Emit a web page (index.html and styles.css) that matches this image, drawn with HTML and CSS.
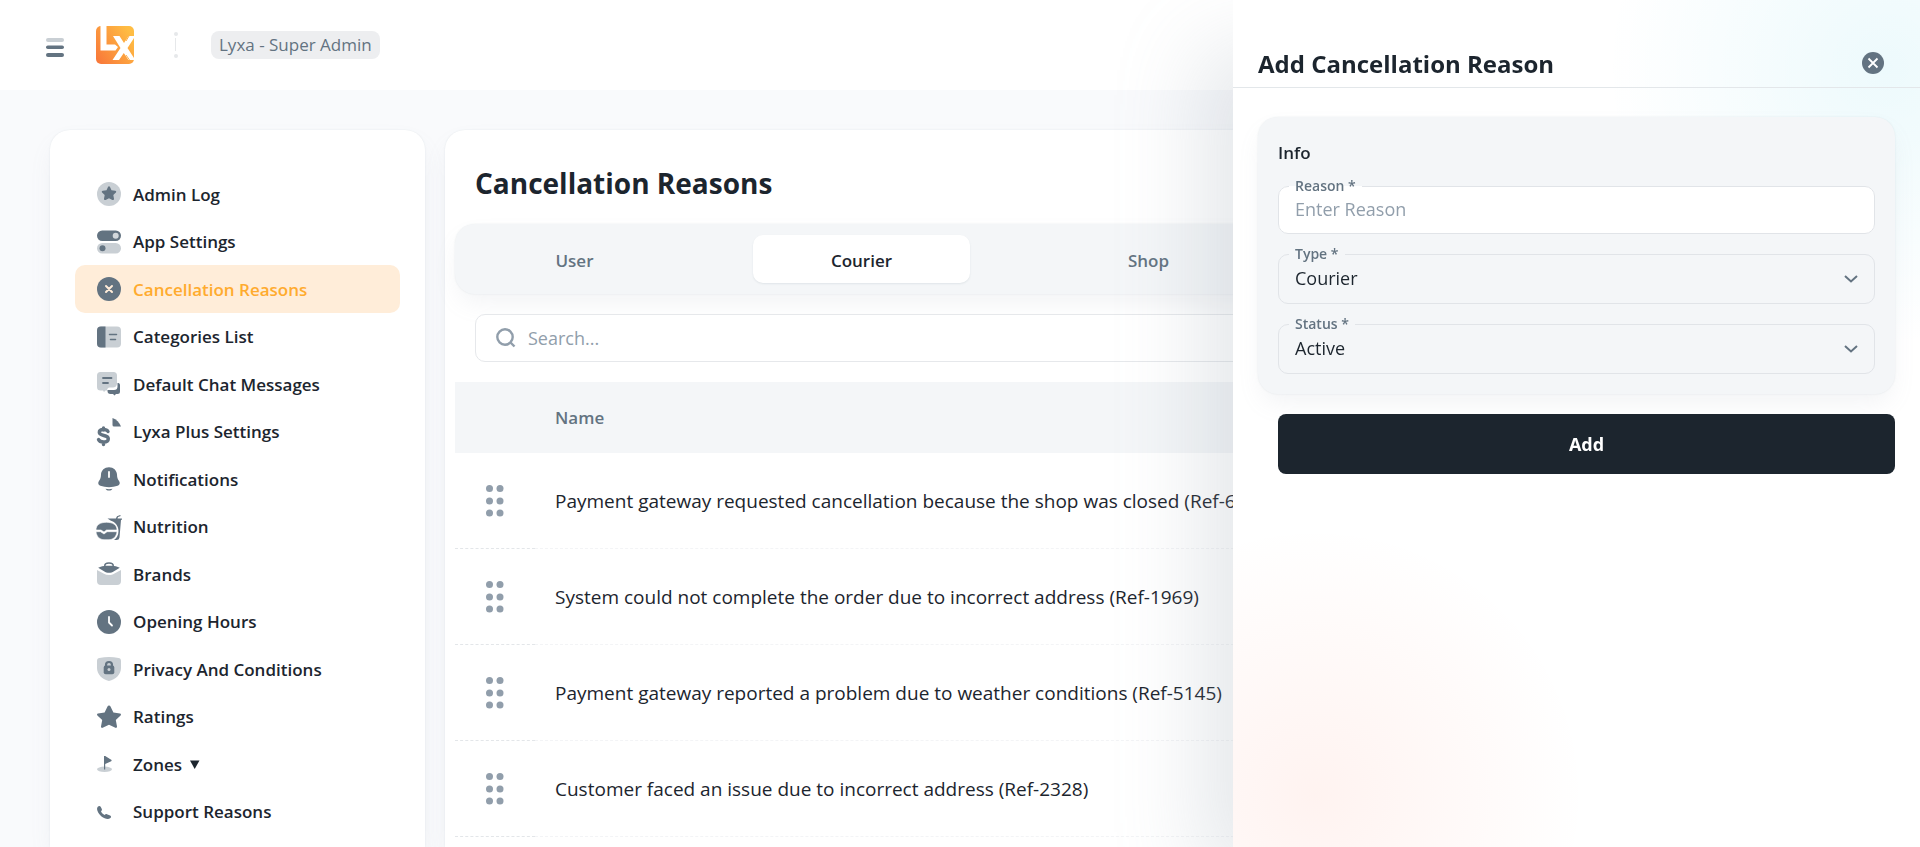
FILE: index.html
```html
<!DOCTYPE html>
<html lang="en">
<head>
<meta charset="utf-8">
<title>Cancellation Reasons</title>
<link rel="stylesheet" href="styles.css">
</head>
<body>
<header class="topbar">
  <button class="menu-button" type="button" aria-label="Menu">
    <svg width="18" height="20" viewBox="0 0 18 20"><rect class="soft" y="0" width="18" height="4" rx="2"/><rect y="7.500" width="18" height="3.600" rx="1.800"/><rect y="15" width="18" height="4" rx="2"/></svg>
  </button>
  <a class="logo" href="#" aria-label="Home">
    <svg width="38" height="38" viewBox="0 0 38 38">
      <defs><linearGradient id="logo-fill" x1="0" y1="1" x2="1" y2="0.3"><stop offset="0" stop-color="#f87439"/><stop offset="1" stop-color="#ffbd43"/></linearGradient></defs>
      <rect width="38" height="38" rx="5" fill="url(#logo-fill)"/>
      <path fill="#fff" d="M4.500 0h6v18.500H19l3 2.500-2.500 3.500h-15z"/>
      <path fill="#fff" d="M17 10h6.500l4.500 7 4.500-7H38v2l-6.500 10L38 32v2h-5.500l-4.700-7-4.800 7h-6.500l8-12z"/>
      <path d="M30 15l3-5M30 29l3.500 5" stroke="#fdae4b" fill="none"/>
    </svg>
  </a>
  <svg class="divider" width="6" height="28" viewBox="0 0 6 28"><circle cx="3" cy="3" r="2"/><path d="M2 7h1v13H2z"/><circle cx="3" cy="25" r="2"/></svg>
  <span class="chip">Lyxa - Super Admin</span>
</header>

<div class="layout">
  <nav class="sidebar">
    <a class="nav-item" href="#"><svg class="icon" viewBox="0 0 24 24"><circle class="soft" cx="12" cy="12" r="12"/><path d="M12 4.200c.5 0 .8.300 1 .7l1.500 3.300 3.700.5c1 .1 1.400 1.100.7 1.800l-2.600 2.600.7 3.700c.1.900-.8 1.600-1.600 1.100L12 16.200l-3.400 1.700c-.8.500-1.700-.2-1.600-1.100l.7-3.700-2.600-2.600c-.7-.7-.3-1.700.7-1.800l3.700-.5L11 4.900c.2-.4.500-.7 1-.7z"/></svg>Admin Log</a>
    <a class="nav-item" href="#"><svg class="icon" viewBox="0 0 24 24"><rect y="0.500" width="24" height="10.500" rx="5.200"/><circle cx="18.700" cy="5.800" r="3" fill="#d3d8dc"/><rect class="soft" y="13" width="24" height="10.500" rx="5.200"/><circle cx="5.500" cy="18.200" r="3"/></svg>App Settings</a>
    <a class="nav-item nav-item-active" href="#"><svg class="icon" viewBox="0 0 24 24"><circle cx="12" cy="12" r="12"/><path d="M9 9l6 6M15 9l-6 6" stroke="#ffecd8" stroke-width="2" stroke-linecap="round"/></svg>Cancellation Reasons</a>
    <a class="nav-item" href="#"><svg class="icon" viewBox="0 0 24 24"><rect class="soft" y="1.500" width="24" height="21" rx="4"/><path d="M4 1.500h4.500v21H4a4 4 0 0 1-4-4v-13a4 4 0 0 1 4-4z"/><path d="M12.500 9.500h7M13.500 14.500h5" stroke="#637381" stroke-width="1.500" stroke-linecap="round"/></svg>Categories List</a>
    <a class="nav-item" href="#"><svg class="icon" viewBox="0 0 24 24"><path class="soft" d="M3.500 0h13A3.500 3.500 0 0 1 20 3.500v8.500c-.5 2.500-2 3.500-4 3.500h-3.500c-1.500 0-2.500 1.500-2.500 3h-1.500L7 20l-1-1.500H3.500A3.500 3.500 0 0 1 0 15V3.500A3.500 3.500 0 0 1 3.500 0z"/><path d="M20.500 11h1a2 2 0 0 1 1.500 2v6.500a2.500 2.500 0 0 1-2.500 2.500H19l-1.500 1.500L16 22h-2.500a3 3 0 0 1-3-3v-1H17a3.500 3.500 0 0 0 3.500-3.500z"/><path d="M6 6h8.500M6 11h5" stroke="#637381" stroke-width="1.800" stroke-linecap="round"/></svg>Default Chat Messages</a>
    <a class="nav-item" href="#"><svg class="icon" viewBox="0 0 24 24"><path d="M11 11.500C10 9.800 8.500 9.500 6.500 9.500c-2.500 0-4.200 1-4.200 2.800 0 4.400 9 2 9 6.400 0 2-2 3.300-4.800 3.300-2.500 0-4.200-.6-5-2.500M6.500 8v2M6.500 22.500v2" fill="none" stroke="#637381" stroke-width="3.400" stroke-linecap="round"/><path d="M15.500-2c3.800 1.400 7 4.500 8.500 8.500h-7a1.500 1.500 0 0 1-1.500-1.500z"/></svg>Lyxa Plus Settings</a>
    <a class="nav-item" href="#"><svg class="icon" viewBox="0 0 24 24"><path d="M12 .3c4.500 0 7.800 3.200 8 7.200.1 3 .5 4.500 1.900 6.300 1.500 2 1 4.300-1.300 5C15.500 20.700 8.500 20.700 3.400 18.800c-2.300-.7-2.800-3-1.300-5C3.500 12 3.900 10.500 4 7.500 4.200 3.500 7.500.3 12 .3z"/><path d="M8.500 21.700c2.300.6 4.700.6 7 0-1.300 2.500-5.700 2.500-7 0z"/><path d="M12 5v5" stroke="#fff" stroke-width="1.800" stroke-linecap="round"/></svg>Notifications</a>
    <a class="nav-item" href="#"><svg class="icon" viewBox="0 0 24 24"><path d="M10.500 3.500h8.300L20 1.200 23.200 0l.5 1-2.700 1.100-.5 1.400H25l-.3 1.500h-.7l-1.500 17.500a3 3 0 0 1-3 2.500h-2.500c2.500-2 4.500-4.500 4.500-9 0-5-3-9-8-10.500z"/><path d="M-1 15C-1 10 3 7.300 9.500 7.300S20 10 20 15H9.500L7 17l-3-2zM-1 16.700h4.500L7 19l3-2.300h10c-.5 5-4 8-8 8H7c-4 0-7.500-3-8-8z" stroke="#fff" stroke-width="0.600"/></svg>Nutrition</a>
    <a class="nav-item" href="#"><svg class="icon" viewBox="0 0 24 24"><path class="soft" d="M0 8l6.500 3.500c3.500 2 7.500 2 11 0L24 8v11a4 4 0 0 1-4 4H4a4 4 0 0 1-4-4z"/><path fill-rule="evenodd" d="M7 4c0-2.500 1.500-3.700 5-3.700S17 1.500 17 4c2.500.3 4.200 1 5.800 1.800L17 9.200c-3 2-7 2-10 0L1.200 5.800C2.800 5 4.500 4.300 7 4zm1.500-.2h7c0-1.300-1-2-3.500-2s-3.500.7-3.500 2z"/></svg>Brands</a>
    <a class="nav-item" href="#"><svg class="icon" viewBox="0 0 24 24"><circle cx="12" cy="12" r="12"/><path d="M12 7v5.500l3 3" fill="none" stroke="#fff" stroke-width="1.800" stroke-linecap="round" stroke-linejoin="round"/></svg>Opening Hours</a>
    <a class="nav-item" href="#"><svg class="icon" viewBox="0 0 24 24"><path class="soft" d="M2.500 1C8.500-.3 15.500-.3 21.500 1 23 1.300 24 2 24 4v7c0 6.500-5.500 11.500-12 13C5.500 22.500 0 17.500 0 11V4c0-2 1-2.700 2.500-3z"/><rect x="6.700" y="8.500" width="10.600" height="8.700" rx="2"/><path d="M9 9.500V8a3 3 0 0 1 6 0v1.500" fill="none" stroke="#637381" stroke-width="2.200"/><circle cx="12" cy="12.500" r="1.500" fill="#c9cfd4"/></svg>Privacy And Conditions</a>
    <a class="nav-item" href="#"><svg class="icon" viewBox="0 0 24 24"><path d="M12 .5c.7 0 1.200.5 1.500 1.100l2.900 6 6.600.9c1 .2 1.300 1.200.6 1.900l-4.800 4.700 1.200 6.500c.1 1-.8 1.600-1.600 1.200L12 19.700l-6.400 3.100c-.8.400-1.700-.2-1.600-1.200l1.200-6.500L.4 10.400C-.3 9.700 0 8.700 1 8.500l6.600-.9 2.900-6C10.800 1 11.300.5 12 .5z"/></svg>Ratings</a>
    <a class="nav-item" href="#"><svg class="icon" viewBox="0 0 24 24"><ellipse class="soft" cx="7.500" cy="17.300" rx="7.500" ry="2.700"/><path d="M7 4h1.200l6 3.800c.6.400.6 1 0 1.400L8.200 12v5.500H7z"/></svg>Zones<svg class="caret" width="10" height="9" viewBox="0 0 10 9"><path d="M0 .5h9.500L4.700 9z"/></svg></a>
    <a class="nav-item" href="#"><svg class="icon" viewBox="0 0 24 24"><path d="M.8 6.800c1-1 2.400-1 3 .2l1 2c.4.9 0 1.700-.8 2.300.7 1.900 1.900 3 3.700 3.700.6-.8 1.300-1.200 2.200-.8l3.200 1.200c1.200.5 1.200 1.800.3 2.600-2 1.700-5.600 1-8.900-1.500C1.200 13.500-1.200 9 .8 6.800z"/></svg>Support Reasons</a>
  </nav>

  <main class="content">
    <h1 class="page-title">Cancellation Reasons</h1>
    <div class="tabs" role="tablist">
      <button class="tab" type="button" role="tab">User</button>
      <button class="tab tab-active" type="button" role="tab" aria-selected="true">Courier</button>
      <button class="tab" type="button" role="tab">Shop</button>
    </div>
    <label class="search">
      <svg width="20" height="20" viewBox="0 0 20 20"><circle cx="9" cy="9" r="7.700"/><path d="M14.500 14.500l4 4"/></svg>
      <input type="search" placeholder="Search..." aria-label="Search">
    </label>
    <table class="reasons">
      <thead><tr><th class="drag-cell"></th><th>Name</th></tr></thead>
      <tbody>
        <tr><td class="drag-cell"><svg class="grip" width="18" height="32" viewBox="0 0 18 32"><circle cx="3.500" cy="3.500" r="3.500"/><circle cx="14" cy="3.500" r="3.500"/><circle cx="3.500" cy="16" r="3.500"/><circle cx="14" cy="16" r="3.500"/><circle cx="3.500" cy="28" r="3.500"/><circle cx="14" cy="28" r="3.500"/></svg></td><td>Payment gateway requested cancellation because the shop was closed (Ref-6</td></tr>
        <tr><td class="drag-cell"><svg class="grip" width="18" height="32" viewBox="0 0 18 32"><circle cx="3.500" cy="3.500" r="3.500"/><circle cx="14" cy="3.500" r="3.500"/><circle cx="3.500" cy="16" r="3.500"/><circle cx="14" cy="16" r="3.500"/><circle cx="3.500" cy="28" r="3.500"/><circle cx="14" cy="28" r="3.500"/></svg></td><td>System could not complete the order due to incorrect address (Ref-1969)</td></tr>
        <tr><td class="drag-cell"><svg class="grip" width="18" height="32" viewBox="0 0 18 32"><circle cx="3.500" cy="3.500" r="3.500"/><circle cx="14" cy="3.500" r="3.500"/><circle cx="3.500" cy="16" r="3.500"/><circle cx="14" cy="16" r="3.500"/><circle cx="3.500" cy="28" r="3.500"/><circle cx="14" cy="28" r="3.500"/></svg></td><td>Payment gateway reported a problem due to weather conditions (Ref-5145)</td></tr>
        <tr><td class="drag-cell"><svg class="grip" width="18" height="32" viewBox="0 0 18 32"><circle cx="3.500" cy="3.500" r="3.500"/><circle cx="14" cy="3.500" r="3.500"/><circle cx="3.500" cy="16" r="3.500"/><circle cx="14" cy="16" r="3.500"/><circle cx="3.500" cy="28" r="3.500"/><circle cx="14" cy="28" r="3.500"/></svg></td><td>Customer faced an issue due to incorrect address (Ref-2328)</td></tr>
      </tbody>
    </table>
  </main>
</div>

<aside class="drawer">
  <div class="drawer-header">
    <h2 class="drawer-title">Add Cancellation Reason</h2>
    <button class="close-button" type="button" aria-label="Close">
      <svg width="22" height="22" viewBox="0 0 22 22"><circle cx="11" cy="11" r="11"/><path d="M6.500 6.500l9 9M15.500 6.500l-9 9" stroke="#fff" stroke-width="1.800"/></svg>
    </button>
  </div>
  <form class="drawer-form">
    <section class="panel">
      <h3 class="panel-title">Info</h3>
      <fieldset class="field field-filled">
        <legend class="field-legend"><label for="reason">Reason *</label></legend>
        <input class="field-control" id="reason" type="text" placeholder="Enter Reason">
      </fieldset>
      <fieldset class="field">
        <legend class="field-legend"><label for="type">Type *</label></legend>
        <select class="field-control" id="type"><option>Courier</option></select>
        <svg class="chevron" width="14" height="10" viewBox="0 0 14 10"><path d="M1 2l6 5.500L13 2"/></svg>
      </fieldset>
      <fieldset class="field">
        <legend class="field-legend"><label for="status">Status *</label></legend>
        <select class="field-control" id="status"><option>Active</option></select>
        <svg class="chevron" width="14" height="10" viewBox="0 0 14 10"><path d="M1 2l6 5.500L13 2"/></svg>
      </fieldset>
    </section>
    <button class="submit" type="button">Add</button>
  </form>
</aside>
</body>
</html>
```

FILE: styles.css
```css
* {
  box-sizing: border-box;
}

html,
body {
  height: 100%;
}

body {
  display: flex;
  flex-direction: column;
  margin: 0;
  overflow: hidden;
  background: #f9fafc;
  color: #1c252e;
  font-family: "Open Sans", "Noto Sans", sans-serif;
  font-size: 18px;
}

button,
input,
select {
  font: inherit;
  color: inherit;
}

button {
  padding: 0;
  border: 0;
  background: none;
  cursor: pointer;
}

h1,
h2,
h3 {
  margin: 0;
  font-weight: 700;
}

svg {
  flex: none;
  fill: #637381;
}

.soft {
  fill: #c9cfd4;
}

.topbar {
  display: flex;
  flex: none;
  align-items: center;
  height: 90px;
  padding: 0 46px;
  background: #fff;
}

.menu-button {
  display: flex;
  padding-top: 6px;
}

.logo {
  display: flex;
  margin-left: 32px;
}

.divider {
  margin-left: 39px;
  fill: #e6e8ea;
}

.chip {
  margin-left: 32px;
  padding: 0 8px;
  border-radius: 8px;
  background: #edeef0;
  color: #637381;
  font-size: 17px;
  line-height: 28px;
}

.layout {
  display: flex;
  flex: 1;
  gap: 20px;
  min-height: 0;
  padding: 40px 50px 0;
}

.sidebar,
.content {
  border-radius: 20px 20px 0 0;
  background: #fff;
  box-shadow: 0 0 2px rgba(145, 158, 171, 0.2), 0 12px 24px -4px rgba(145, 158, 171, 0.12);
}

.sidebar {
  flex: none;
  width: 375px;
  padding: 40px 25px 0;
}

.nav-item {
  display: flex;
  align-items: center;
  height: 47px;
  padding-left: 22px;
  border-radius: 10px;
  color: #1c252e;
  font-size: 17px;
  font-weight: 560;
  text-decoration: none;
}

.nav-item:nth-child(odd) {
  height: 48px;
}

.nav-item-active {
  background: #ffedd9;
  color: #ffab2e;
  font-weight: 650;
}

.icon {
  width: 24px;
  height: 24px;
  margin-right: 12px;
  overflow: visible;
}

.caret {
  margin-left: 8px;
  fill: #1c252e;
}

.content {
  flex: 1;
  min-width: 0;
  padding: 32px 10px 0;
}

.page-title {
  padding: 0 20px;
  font-size: 28px;
  line-height: 42px;
}

.tabs {
  display: flex;
  gap: 70px;
  margin-top: 20px;
  padding: 11px;
  border-radius: 20px;
  background: #f4f6f8;
  box-shadow: 0 0 2px rgba(145, 158, 171, 0.2), 0 12px 24px -4px rgba(145, 158, 171, 0.12);
}

.tab {
  width: 217px;
  height: 48px;
  padding-top: 2px;
  border-radius: 10px;
  color: #637381;
  font-size: 17px;
  font-weight: 600;
}

.tab-active {
  background: #fff;
  color: #1c252e;
  box-shadow: 0 1px 2px rgba(145, 158, 171, 0.2);
}

.search {
  display: flex;
  align-items: center;
  gap: 12px;
  height: 48px;
  margin: 20px 20px 0;
  padding: 0 20px;
  border: 1px solid #e6e8eb;
  border-radius: 10px;
  background: #fff;
}

.search svg {
  fill: none;
  stroke: #919eab;
  stroke-width: 2.4;
}

.search input {
  flex: 1;
  min-width: 0;
  padding: 0;
  border: 0;
  background: none;
}

::placeholder {
  color: #919eab;
  opacity: 1;
}

.reasons {
  width: 100%;
  margin-top: 20px;
  border-collapse: separate;
  border-spacing: 0;
  table-layout: fixed;
}

.reasons th {
  height: 71px;
  padding: 0 20px;
  background: #f4f6f8;
  color: #637381;
  font-size: 17px;
  font-weight: 600;
  text-align: left;
}

.reasons td {
  height: 96px;
  padding: 0 20px;
  border-bottom: 1px dashed #f3f4f6;
  font-size: 19px;
  white-space: nowrap;
}

.reasons .drag-cell {
  width: 80px;
  padding: 0 31px;
  border-bottom-color: #e3e6e9;
}

.grip {
  display: block;
  fill: #919eab;
}

.drawer {
  position: fixed;
  top: 0;
  right: 0;
  bottom: 0;
  width: 687px;
  background:
    radial-gradient(circle at 95% 8%, rgba(0, 184, 217, 0.07), rgba(0, 184, 217, 0) 280px),
    radial-gradient(circle at 12% 94%, rgba(255, 86, 48, 0.07), rgba(255, 86, 48, 0) 270px),
    #fff;
  box-shadow: -40px 40px 80px -8px rgba(145, 158, 171, 0.24);
}

.drawer-header {
  display: flex;
  align-items: center;
  justify-content: space-between;
  height: 88px;
  padding: 38px 36px 0 25px;
  border-bottom: 1px solid #e3e7ea;
}

.drawer-title {
  padding-top: 2px;
  font-size: 24px;
  line-height: 46px;
}

.close-button {
  display: flex;
}

.drawer-form {
  display: flex;
  flex-direction: column;
  gap: 20px;
  padding: 29px 25px 0;
}

.panel {
  display: flex;
  flex-direction: column;
  gap: 11px;
  padding: 23px 20px 20px;
  border-radius: 20px;
  background: #f4f6f8;
  box-shadow: 0 0 2px rgba(145, 158, 171, 0.2), 0 12px 24px -4px rgba(145, 158, 171, 0.12);
}

.panel-title {
  font-size: 17px;
  font-weight: 600;
  line-height: 26px;
}

.field {
  position: relative;
  min-width: 0;
  margin: 0;
  padding: 0 0 10px;
  border: 1px solid #e1e4e8;
  border-radius: 10px;
}

.field-filled {
  background: #fff;
}

.field-legend {
  margin-left: 10px;
  padding: 0 6px;
  color: #637381;
  font-size: 14px;
  font-weight: 600;
  line-height: 18px;
}

.field-control {
  display: block;
  width: 100%;
  height: 30px;
  padding: 0 16px;
  border: 0;
  background: none;
  appearance: none;
}

.field-filled .field-control {
  height: 28px;
}

.chevron {
  position: absolute;
  top: 11px;
  right: 16px;
  fill: none;
  stroke: #637381;
  stroke-width: 2;
  pointer-events: none;
}

.submit {
  height: 60px;
  margin-left: 20px;
  border-radius: 8px;
  background: #1c252e;
  color: #fff;
  font-weight: 700;
}
```
